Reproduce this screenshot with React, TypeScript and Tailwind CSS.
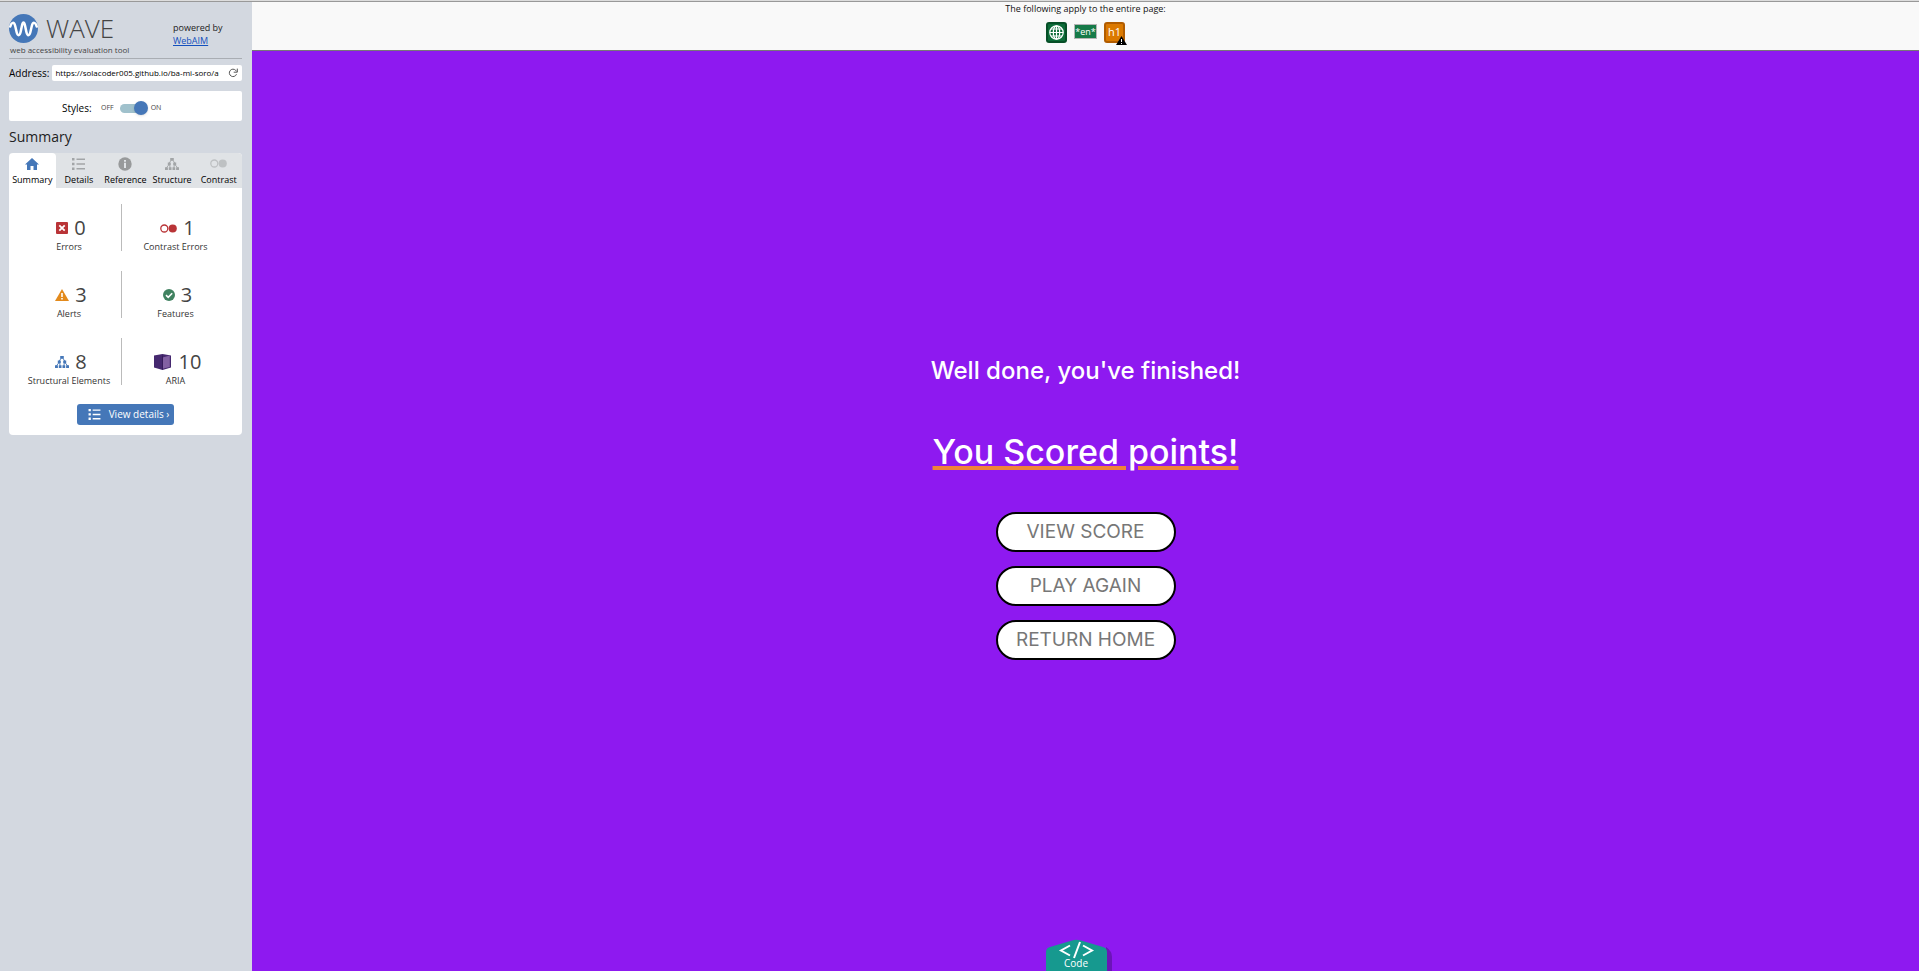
import type { ReactNode } from "react";

type IconProps = { className?: string };

function WaveLogo() {
  return (
    <svg viewBox="0 0 29 29" className="size-[29px] shrink-0" aria-hidden="true">
      <circle cx="14.5" cy="14.5" r="14.5" fill="#4577b8" />
      <path
        d="M1.300 12.500C2.500 8 5 7.500 6.200 12L7.600 18C8.600 22.200 10.600 22.200 11.600 18L13 11.500C13.800 7.600 15.200 7.600 16 11.500L17.400 18C18.400 22.200 20.400 22.200 21.400 18L22.800 12C24 7.500 26.500 8 27.700 12.500"
        fill="none"
        stroke="#fff"
        strokeWidth="2.500"
        strokeLinecap="round"
      />
    </svg>
  );
}

function ReloadIcon() {
  return (
    <svg viewBox="0 0 10 10" className="size-[10px]" aria-hidden="true">
      <path d="M8.500 6.200A3.700 3.700 0 1 1 7.700 2.300L8.900 3.500" fill="none" stroke="#555" strokeWidth="1" />
      <path d="M9.300.6V4.200H5.700" fill="none" stroke="#555" strokeWidth="1" />
    </svg>
  );
}

function HomeIcon({ className }: IconProps) {
  return (
    <svg viewBox="0 0 14 12" className={className} fill="currentColor" aria-hidden="true">
      <path d="M7 0 14 6.400H12V12H8.500V8H5.500V12H2V6.400H0Z" />
    </svg>
  );
}

function ListIcon({ className }: IconProps) {
  return (
    <svg viewBox="0 0 13 12" className={className} fill="currentColor" aria-hidden="true">
      <path d="M0 0H2.500V2.500H0ZM0 4.700H2.500V7.200H0ZM0 9.400H2.500V11.900H0ZM4.500.5H13V2H4.500ZM4.500 5.200H13V6.700H4.500ZM4.500 9.900H13V11.400H4.500Z" />
    </svg>
  );
}

function InfoIcon({ className }: IconProps) {
  return (
    <svg viewBox="0 0 14 14" className={className} aria-hidden="true">
      <circle cx="7" cy="7" r="6.700" fill="currentColor" />
      <path d="M6 3H8V4.700H6ZM6 5.800H8V11H6Z" fill="#e0e3e6" />
    </svg>
  );
}

function StructureIcon({ className }: IconProps) {
  return (
    <svg viewBox="0 0 14 12" className={className} fill="currentColor" aria-hidden="true">
      <path d="M5.200 0H8.800V2.700H5.200ZM2.800 4.600H5.800V7.300H2.800ZM8.200 4.600H11.200V7.300H8.200ZM0 9.300H2.900V12H0ZM3.800 9.300H6.500V12H3.800ZM7.500 9.300H10.200V12H7.500ZM11.100 9.300H14V12H11.100Z" />
      <path
        d="M6.200 2.200 4.200 5M7.800 2.200 9.800 5M3.700 7 1.400 9.800M4.700 7 5.100 9.800M9.300 7 8.900 9.800M10.300 7 12.600 9.800"
        fill="none"
        stroke="currentColor"
        strokeWidth=".9"
      />
    </svg>
  );
}

function ContrastIcon({ className }: IconProps) {
  return (
    <svg viewBox="0 0 17 9" className={className} aria-hidden="true">
      <circle cx="4.300" cy="4.500" r="3.500" fill="none" stroke="currentColor" strokeWidth="1.3" />
      <circle cx="12.700" cy="4.500" r="4.100" fill="currentColor" />
    </svg>
  );
}

function ErrorIcon() {
  return (
    <svg viewBox="0 0 12 12" className="size-3" aria-hidden="true">
      <rect width="12" height="12" rx="1" fill="#b93437" />
      <path d="M3.300 3.300 8.700 8.700M8.700 3.300 3.300 8.700" stroke="#fff" strokeWidth="1.800" />
    </svg>
  );
}

function AlertIcon() {
  return (
    <svg viewBox="0 0 14 12" className="h-3 w-[14px]" aria-hidden="true">
      <path d="M7 0 14 12H0Z" fill="#e38a1c" />
      <path d="M6.200 4H7.800V8H6.200ZM6.200 9H7.800V10.500H6.200Z" fill="#fff" />
    </svg>
  );
}

function FeatureIcon() {
  return (
    <svg viewBox="0 0 12 12" className="size-3" aria-hidden="true">
      <circle cx="6" cy="6" r="6" fill="#408260" />
      <path d="M3 6.200 5.200 8.300 9.200 4.200" fill="none" stroke="#fff" strokeWidth="1.600" />
    </svg>
  );
}

function AriaIcon() {
  return (
    <svg viewBox="0 0 17 16" className="mr-[2px] h-4 w-[17px]" aria-hidden="true">
      <path d="M0 1.500 8.500 0 17 1.500V13.500L8.500 16 0 13.500Z" fill="#45286f" />
      <path d="M8.700 3.500 15.800 1.500V13L8.700 14.800Z" fill="#8361a3" />
      <path d="M8.500 1.500V15.500" stroke="#2f1652" strokeWidth=".8" />
    </svg>
  );
}

function GlobeBadge() {
  return (
    <svg viewBox="0 0 21 21" className="size-[21px]" aria-hidden="true">
      <rect width="21" height="21" rx="3" fill="#064f27" />
      <rect x="2" y="2" width="17" height="17" rx="1" fill="#0c6b38" />
      <g fill="none" stroke="#fff" strokeWidth="1.200">
        <circle cx="10.500" cy="10.500" r="6.700" />
        <ellipse cx="10.500" cy="10.500" rx="3.200" ry="6.700" />
        <path d="M10.500 3.800V17.200M3.800 10.500H17.200M4.800 7H16.200M4.800 14H16.200" />
      </g>
    </svg>
  );
}

const tabs: { name: string; icon: ReactNode }[] = [
  { name: "Summary", icon: <HomeIcon className="h-3 w-[14px] text-[#4577b8]" /> },
  { name: "Details", icon: <ListIcon className="h-3 w-[13px] text-[#a2a5a7]" /> },
  { name: "Reference", icon: <InfoIcon className="size-[14px] text-[#989a9b]" /> },
  { name: "Structure", icon: <StructureIcon className="h-3 w-[14px] text-[#a2a5a7]" /> },
  { name: "Contrast", icon: <ContrastIcon className="h-[9px] w-[17px] text-[#bec1c3]" /> },
];

const stats: { label: string; count: number; icon: ReactNode }[] = [
  { label: "Errors", count: 0, icon: <ErrorIcon /> },
  { label: "Contrast Errors", count: 1, icon: <ContrastIcon className="h-[9px] w-[17px] text-[#b93437]" /> },
  { label: "Alerts", count: 3, icon: <AlertIcon /> },
  { label: "Features", count: 3, icon: <FeatureIcon /> },
  { label: "Structural Elements", count: 8, icon: <StructureIcon className="h-3 w-[14px] text-[#4577b8]" /> },
  { label: "ARIA", count: 10, icon: <AriaIcon /> },
];

function Sidebar() {
  return (
    <aside className="w-[252px] shrink-0 bg-[#d3d8e0] pt-[10px] pr-[10px] pl-[9px]">
      <header className="flex items-start justify-between border-b border-[#a9adb3] pb-[2px]">
        <div>
          <div className="flex h-8 items-center gap-[8px]">
            <WaveLogo />
            <span className="text-[26px] leading-8 font-light text-[#444]">WAVE</span>
          </div>
          <p className="pl-px text-[8px] leading-3 whitespace-nowrap text-[#444]">web accessibility evaluation tool</p>
        </div>
        <p className="w-[69px] pt-[9px] text-[9px] leading-[13px] text-[#222]">
          powered by
          <br />
          <a href="#webaim" className="text-[#1450bd] underline">WebAIM</a>
        </p>
      </header>

      <div className="mt-[6px] flex items-center gap-[3px]">
        <label htmlFor="address" className="text-[10px] leading-4">Address:</label>
        <div className="flex h-4 min-w-0 flex-1 items-center gap-1 rounded-[2px] bg-white pr-[4px] pl-[3px]">
          <input
            id="address"
            className="h-4 min-w-0 flex-1 bg-transparent text-[8px] leading-4 outline-none"
            defaultValue="https://solacoder005.github.io/ba-mi-soro/a"
          />
          <button aria-label="Reload page"><ReloadIcon /></button>
        </div>
      </div>

      <div className="mt-[10px] flex h-[30px] items-center rounded-[2px] bg-white pt-1 pl-[53px]">
        <label htmlFor="styles" className="w-[39px] text-[10px]">Styles:</label>
        <span className="text-[7px] text-[#444]">OFF</span>
        <span className="relative mr-[3px] ml-[4px] flex h-[14px] w-[30px] items-center pl-[2px]">
          <input
            id="styles"
            type="checkbox"
            role="switch"
            defaultChecked
            className="peer h-[9px] w-6 appearance-none rounded-full bg-[#a0c1cc]"
          />
          <span className="pointer-events-none absolute left-[1px] size-[14px] rounded-full bg-[#4577b8] shadow peer-checked:left-[16px]" />
        </span>
        <span className="text-[7px] text-[#444]">ON</span>
      </div>

      <h2 className="mt-[6px] text-[14px] leading-5 text-[#222]">Summary</h2>

      <div className="mt-[6px] overflow-hidden rounded-[4px] bg-white">
        <div role="tablist" className="grid h-[35px] grid-cols-5 bg-[#e0e3e6]">
          {tabs.map((tab, i) => (
            <button
              key={tab.name}
              role="tab"
              aria-selected={i === 0}
              className="flex flex-col items-center rounded-t-[4px] pt-[3px] text-[9px] leading-3 text-black aria-selected:bg-white"
            >
              <span className="flex h-[15px] items-center">{tab.icon}</span>
              <span className="mt-[3px]">{tab.name}</span>
            </button>
          ))}
        </div>

        <ul className="grid grid-cols-[113px_1fr] gap-y-5 pt-4">
          {stats.map((stat) => (
            <li
              key={stat.label}
              className="flex h-[47px] flex-col items-center border-[#bbb] odd:border-r odd:pl-2 even:pr-[13px]"
            >
              <div className="mt-[11px] flex h-[26px] items-center gap-[6px] pl-1 text-[20px] leading-[26px] text-[#444]">
                {stat.icon}
                {stat.count}
              </div>
              <div className="text-[9px] leading-3 whitespace-nowrap text-[#333]">{stat.label}</div>
            </li>
          ))}
        </ul>

        <div className="flex justify-center pt-[19px] pb-[10px]">
          <button className="flex h-[21px] items-center gap-[8px] rounded-[3px] bg-[#4577b8] pr-[5px] pl-[11px] text-[10px] whitespace-nowrap text-white">
            <ListIcon className="h-[11px] w-[13px]" />
            View details ›
          </button>
        </div>
      </div>
    </aside>
  );
}

function PageNotes() {
  return (
    <section className="flex h-[49px] flex-col items-center border-b border-[#777] bg-[#f9f9f9]">
      <p className="text-[9px] leading-[14px] text-[#111]">The following apply to the entire page:</p>
      <div className="mt-[6px] flex gap-[7px]">
        <GlobeBadge />
        <span className="mt-[2px] flex h-[15px] w-[23px] items-center justify-center border border-[#b5b5b5] bg-[#167a48] text-[9px] leading-3 text-white">
          *en*
        </span>
        <span className="relative flex size-[21px] items-center justify-center rounded-[3px] border-2 border-[#b15c00] bg-[#db7900] text-[11px] text-white">
          h1
          <svg viewBox="0 0 11 9" className="absolute -right-[4px] -bottom-[4px] h-[9px] w-[11px]" aria-hidden="true">
            <path d="M5.500 0 11 9H0Z" />
            <path d="M5 3H6V6H5ZM5 7H6V8H5Z" fill="#fff" />
          </svg>
        </span>
      </div>
    </section>
  );
}

function CodeTab() {
  return (
    <button className="absolute bottom-0 left-1/2 -ml-10 h-[32px] w-[66px] overflow-hidden font-['Open_Sans',sans-serif] text-[10px] font-normal text-white">
      <svg viewBox="0 0 66 32" className="absolute inset-0 size-full" aria-hidden="true">
        <path d="M60 8Q66 12 66 18V32H60Z" fill="#5c12a0" opacity=".7" />
        <path d="M0 32V13Q0 9 4 8L26 1.500Q30 0 35 1.500L57 8Q61 9 61 13V32Z" fill="#16998f" />
        <path d="M24 6.500 15 11.500 24 16.500M37 6.500 46 11.500 37 16.500M34 3 28 19" fill="none" stroke="#fff" strokeWidth="2" />
      </svg>
      <span className="absolute top-[18px] left-0 w-[61px] leading-3">Code</span>
    </button>
  );
}

export default function App() {
  return (
    <div className="flex min-h-screen flex-col bg-[#d3d8e0] font-['Open_Sans',sans-serif] text-black">
      <div className="h-[2px] border-b border-[#999] bg-[#ddd]" />
      <div className="flex flex-1">
        <Sidebar />
        <div className="flex min-w-0 flex-1 flex-col">
          <PageNotes />
          <main className="relative flex flex-1 flex-col items-center justify-center bg-[#8e19f0] pb-[7px] font-['Inter',sans-serif] font-medium text-white">
            <h2 className="text-[24px] leading-8">Well done, you've finished!</h2>
            <h1 className="mt-[41px] text-[34px] leading-[48px] underline decoration-[#f08438] decoration-4 underline-offset-2">
              You Scored points!
            </h1>
            <div className="mt-9 flex flex-col gap-[14px]">
              {["View score", "Play again", "Return home"].map((label) => (
                <button
                  key={label}
                  className="h-10 w-[180px] rounded-full border-2 border-black bg-white text-[19px] font-normal text-[#777] uppercase"
                >
                  {label}
                </button>
              ))}
            </div>
            <CodeTab />
          </main>
        </div>
      </div>
    </div>
  );
}
